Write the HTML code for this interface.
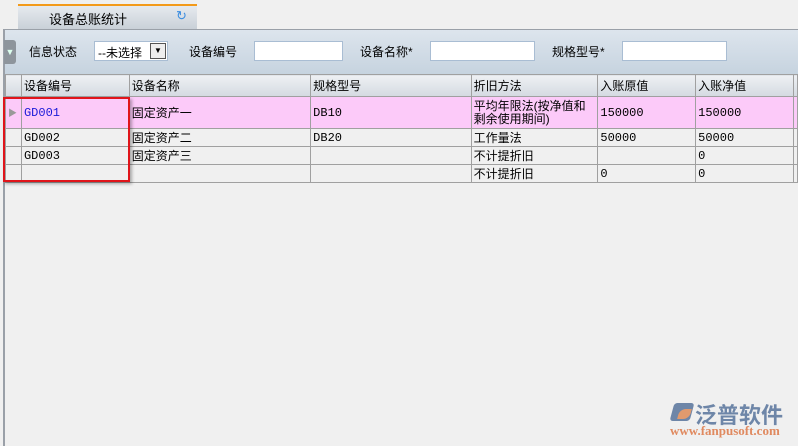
<!DOCTYPE html><html><head><meta charset="utf-8"><style>
body{margin:0;width:798px;height:446px;background:#f0f0f0;font-family:"Liberation Sans","Noto Sans CJK SC",sans-serif;font-size:12px;color:#000;position:relative;overflow:hidden}
.a{position:absolute}
.tab{left:18px;top:4px;width:179px;height:25px;background:linear-gradient(#e6eaef,#c9d0d8);border-top:2px solid #f39a1a;box-sizing:border-box}
.panel{left:3px;top:29px;width:795px;height:417px;border-left:2px solid #9aa0a8;border-top:1px solid #9aa0a8;box-sizing:border-box}
.tb{left:5px;top:30px;width:793px;height:44px;background:linear-gradient(#dde5ed,#c6d3df)}
input{position:absolute;height:20px;border:1px solid #a9bdd3;background:#fff;box-sizing:border-box;margin:0}
table{position:absolute;left:5px;top:74px;border-collapse:collapse;table-layout:fixed}
td{border:1px solid #a0a0a0;padding:0 0 0 2px;font-size:12px;line-height:14px;white-space:nowrap;overflow:hidden}
.h td{background:linear-gradient(#eef0f3,#d4dae1);height:21px}
.p td{background:#fccaf9}
.m{font-family:"Liberation Mono","Noto Sans CJK SC",monospace;font-size:12px}
</style></head><body>
<div class="a tab"><span class="a" style="left:31px;top:3px;font-size:13px">设备总账统计</span><span class="a" style="left:158px;top:2px;color:#3b8de0;font-size:13px">↻</span></div>
<div class="a panel"></div>
<div class="a tb"></div>
<div class="a" style="left:4px;top:40px;width:12px;height:24px;background:#8e959c;border-radius:0 3px 3px 0;color:#dfe;font-size:9px;text-align:center;line-height:24px">▼</div>
<span class="a" style="left:29px;top:43px">信息状态</span>
<div class="a" style="left:94px;top:41px;width:74px;height:20px;background:#fff;border:1px solid #a9bdd3;box-sizing:border-box"><span class="a" style="left:3px;top:2px">--未选择</span><div class="a" style="right:1px;top:1px;width:16px;height:16px;border:1px solid #555;background:#eee;box-sizing:border-box;font-size:8px;text-align:center;line-height:14px">▼</div></div>
<span class="a" style="left:189px;top:43px">设备编号</span><input style="left:254px;top:41px;width:89px">
<span class="a" style="left:360px;top:43px">设备名称*</span><input style="left:430px;top:41px;width:105px">
<span class="a" style="left:552px;top:43px">规格型号*</span><input style="left:622px;top:41px;width:105px">
<table>
<colgroup><col style="width:16px"><col style="width:108px"><col style="width:182px"><col style="width:161px"><col style="width:127px"><col style="width:98px"><col style="width:98px"><col style="width:4px"></colgroup>
<tr class="h"><td></td><td>设备编号</td><td>设备名称</td><td>规格型号</td><td>折旧方法</td><td>入账原值</td><td>入账净值</td><td></td></tr>
<tr class="p" style="height:32px"><td style="color:#999;font-size:9px">▶</td><td class="m" style="color:#1a1ad8">GD001</td><td>固定资产一</td><td class="m">DB10</td><td style="white-space:normal;line-height:13px">平均年限法(按净值和剩余使用期间)</td><td class="m">150000</td><td class="m">150000</td><td></td></tr>
<tr style="height:18px"><td></td><td class="m">GD002</td><td>固定资产二</td><td class="m">DB20</td><td>工作量法</td><td class="m">50000</td><td class="m">50000</td><td></td></tr>
<tr style="height:18px"><td></td><td class="m">GD003</td><td>固定资产三</td><td></td><td>不计提折旧</td><td></td><td class="m">0</td><td></td></tr>
<tr style="height:18px"><td></td><td></td><td></td><td></td><td>不计提折旧</td><td class="m">0</td><td class="m">0</td><td></td></tr>
</table>
<div class="a" style="left:3px;top:97px;width:127px;height:85px;border:2px solid #e0141a;box-sizing:border-box;box-shadow:2px 2px 3px rgba(0,0,0,.3)"></div>
<div class="a" style="left:672px;top:403px;width:20px;height:18px;background:#6e86a8;border-radius:3px;transform:skewX(-15deg)"><div class="a" style="left:7px;top:6px;width:12px;height:10px;background:#e09a6e;border-radius:6px 0 6px 0"></div></div>
<span class="a" style="left:695px;top:398px;font-size:22px;color:#6e86a8;font-weight:bold">泛普软件</span>
<span class="a" style="left:670px;top:423px;font-size:13px;color:#e08a60;font-weight:bold;font-family:'Liberation Serif',serif">www.fanpusoft.com</span>
</body></html>
